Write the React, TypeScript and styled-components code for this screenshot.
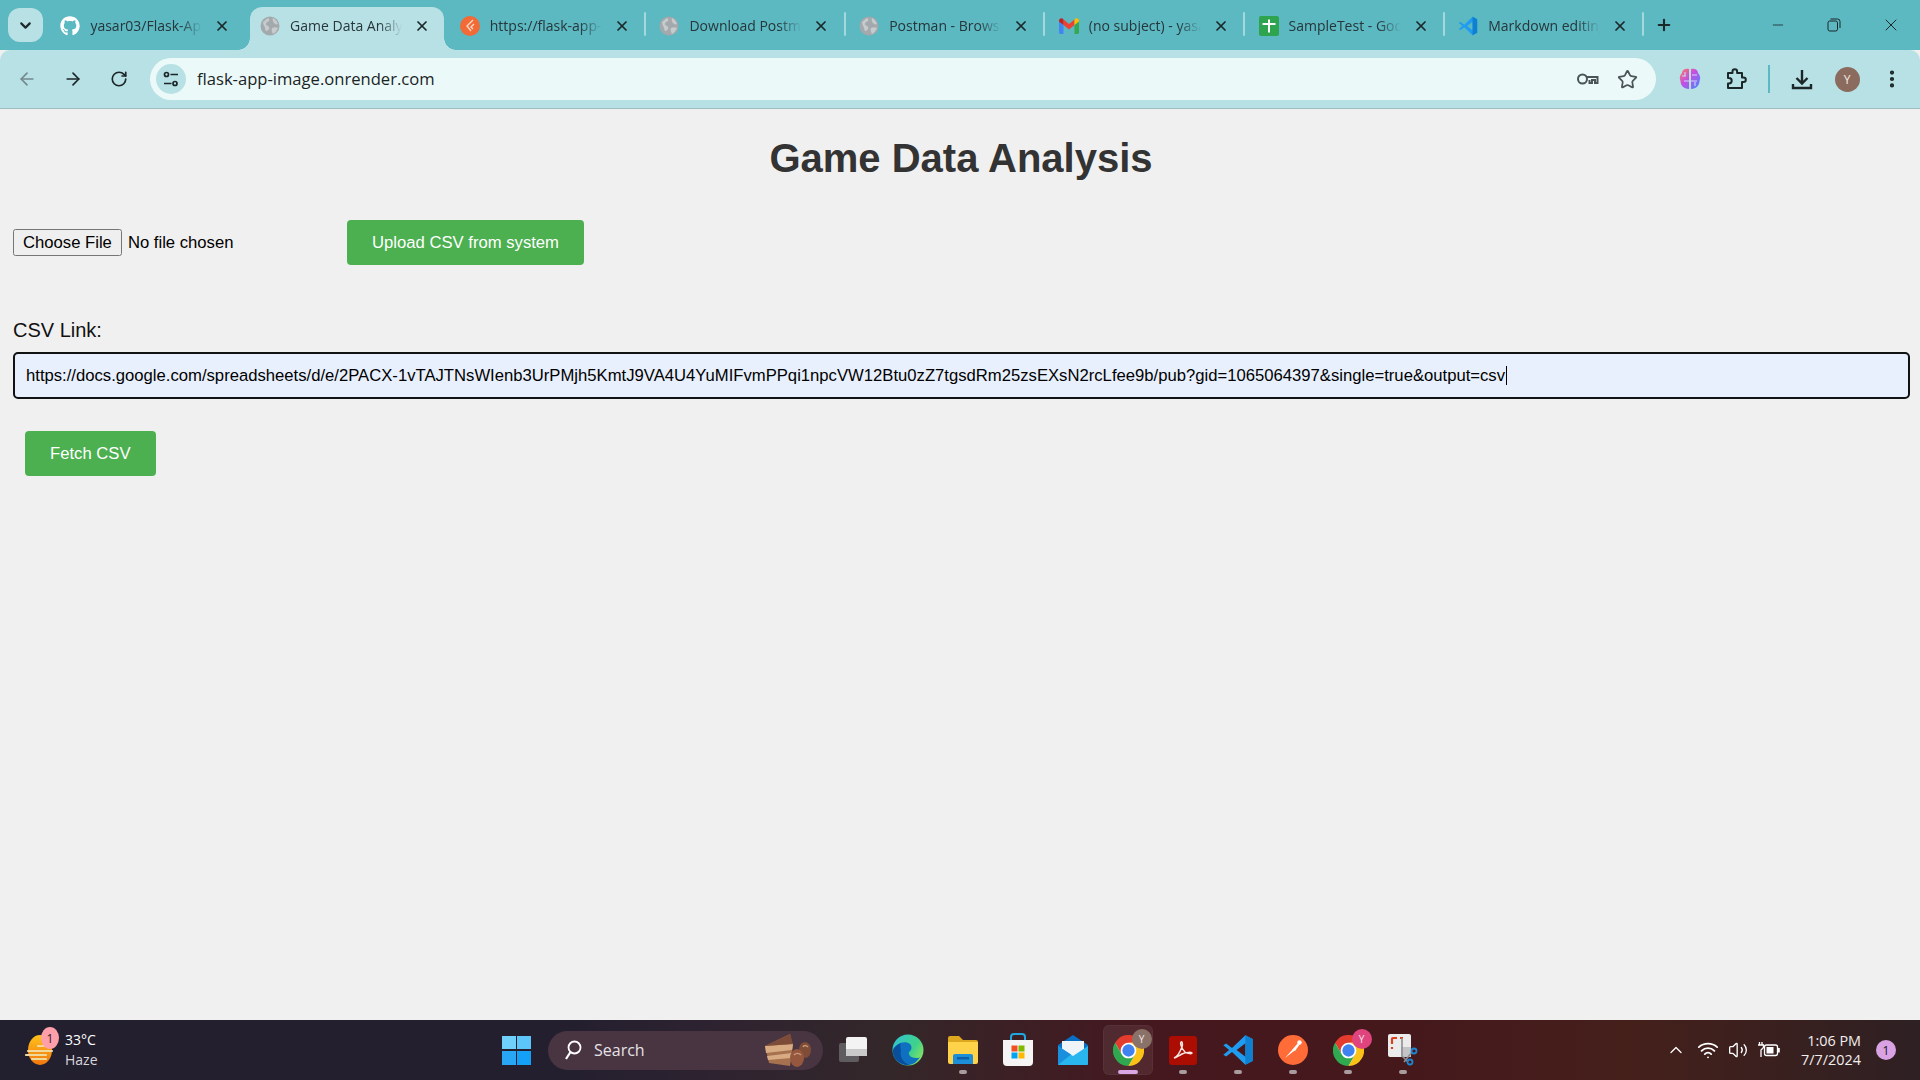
import React from "react";
import styled, { createGlobalStyle } from "styled-components";
import { ArrowLeft, ArrowRight, RotateCw, X, Plus, Minus, Star, ChevronDown, ChevronUp, EllipsisVertical, Wifi, Volume2 } from "lucide-react";
import { FaGithub } from "react-icons/fa";

const URL_VALUE = "https://docs.google.com/spreadsheets/d/e/2PACX-1vTAJTNsWIenb3UrPMjh5KmtJ9VA4U4YuMIFvmPPqi1npcVW12Btu0zZ7tgsdRm25zsEXsN2rcLfee9b/pub?gid=1065064397&single=true&output=csv";

const Global = createGlobalStyle`
  html, body { margin: 0; padding: 0; height: 100%; overflow: hidden; }
  body { font-family: "Liberation Sans", Arial, sans-serif; background: #f0f0f0; }
  * { box-sizing: border-box; }
`;

const Screen = styled.div`
  display: flex; flex-direction: column; width: 1920px; height: 1080px; overflow: hidden;
`;

/* ---------- tab strip ---------- */
const TabStrip = styled.div`
  display: flex; align-items: flex-start; height: 50px; background: #5cb8c1; padding-left: 8px; flex: none;
`;
const TabListButton = styled.div`
  width: 35px; height: 34px; margin-top: 8px; margin-right: 5.4px; border-radius: 12px;
  background: #b8e1e5; color: #1d2a2d; display: flex; align-items: center; justify-content: center;
`;
const Tab = styled.div<{ $active?: boolean; $sep?: boolean }>`
  position: relative; display: flex; align-items: center; width: 199.7px; height: 43px; margin-top: 7px;
  padding: 0 0 5px 12px; flex: none;
  &::before {
    content: ""; position: absolute; display: ${(p) => (p.$active ? "block" : "none")};
    left: 2.4px; right: 3.8px; top: 0; bottom: 0; border-radius: 12px 12px 0 0; background: #b8e1e5;
  }
  &::after {
    content: ""; position: absolute;
    ${(p) => p.$active ? `
      left: -9.6px; right: -8.2px; bottom: 0; height: 12px;
      background:
        radial-gradient(circle at 0 0, transparent 11.5px, #b8e1e5 12px) left bottom / 12px 12px no-repeat,
        radial-gradient(circle at 100% 0, transparent 11.5px, #b8e1e5 12px) right bottom / 12px 12px no-repeat;
    ` : p.$sep ? `
      right: 1.5px; top: 5px; width: 2px; height: 24px; background: #a5d8dc; border-radius: 1px;
    ` : `display: none;`}
  }
`;
const Favicon = styled.span`
  position: relative; width: 20px; height: 20px; flex: none; display: flex; align-items: center; justify-content: center;
  svg { display: block; }
`;
const TabTitle = styled.span`
  position: relative; width: 112px; margin-left: 10px; flex: none; overflow: hidden; white-space: nowrap;
  font: 400 14px/20px "Open Sans", "Noto Sans", sans-serif; color: #26363a;
  -webkit-mask-image: linear-gradient(90deg, #000 80%, transparent 100%);
  mask-image: linear-gradient(90deg, #000 80%, transparent 100%);
`;
const TabClose = styled.span`
  position: relative; margin-left: 12px; width: 16px; height: 16px; color: #1c2729; display: flex; flex: none;
`;
const NewTab = styled.div`
  margin: 16px 0 0 9.5px; color: #1c2729; display: flex;
`;
const WindowControls = styled.div`
  margin-left: auto; display: flex; height: 50px;
`;
const WindowButton = styled.div<{ $w: number }>`
  width: ${(p) => p.$w}px; height: 50px; display: flex; align-items: center; justify-content: center; color: #1b2628;
  padding-bottom: 1px;
`;

/* ---------- toolbar ---------- */
const Toolbar = styled.div`
  display: flex; align-items: center; height: 59px; flex: none; background: #b8e1e5; border-radius: 10px 10px 0 0;
  border-bottom: 1px solid #9dbfc4; padding: 0 0 0 4px;
`;
const ToolButton = styled.div<{ $dim?: boolean; $nudge?: number }>`
  width: 46px; height: 40px; flex: none; display: flex; align-items: center; justify-content: center;
  color: ${(p) => (p.$dim ? "#73898d" : "#1b2628")};
  margin-left: ${(p) => p.$nudge ?? 0}px;
`;
const AddressBar = styled.div`
  display: flex; align-items: center; width: 1506px; height: 42px; margin-left: 8px; border-radius: 21px;
  background: #ecf9f9; padding: 0 9px 0 6px; flex: none;
`;
const TuneChip = styled.div`
  width: 30px; height: 30px; border-radius: 50%; background: #b8e1e5; display: flex; align-items: center; justify-content: center; flex: none;
`;
const UrlText = styled.span`
  margin-left: 11px; font: 400 16.6px/22px "Open Sans", "Noto Sans", sans-serif; color: #1a2426; flex: 1;
`;
const AddressAction = styled.div`
  width: 40px; height: 40px; flex: none; display: flex; align-items: center; justify-content: center; color: #4a5557;
`;
const ToolSeparator = styled.div`
  width: 2px; height: 28px; background: #5cb8c1; margin: 0 9px; flex: none;
`;
const Avatar = styled.div`
  width: 25px; height: 25px; border-radius: 50%; background: #8b6b5e; color: #f3e9e4; display: flex; align-items: center; justify-content: center;
  font: 400 12px "Open Sans", sans-serif;
`;

/* ---------- page ---------- */
const Page = styled.main`
  flex: 1; min-height: 0; background: #f0f0f0; padding: 26px 10px 0 13px;
`;
const Heading = styled.h1`
  margin: 0 -10px 39px -11px; text-align: center; font: 700 40px/46px "Liberation Sans", Arial, sans-serif; color: #333;
`;
const UploadRow = styled.div`
  display: flex; align-items: center; height: 45px;
`;
const FileInput = styled.input`
  width: 334px; font: 400 16.67px "Liberation Sans", Arial, sans-serif; color: #000; flex: none;
  &::file-selector-button {
    height: 27px; padding: 0 8px; margin-right: 6px; font: inherit;
  }
`;
const ActionButton = styled.button<{ $indent?: number }>`
  height: 45px; padding: 0 25px; margin-left: ${(p) => p.$indent ?? 0}px; border: 0; border-radius: 4px; background: #4caf50; color: #fff;
  font: 400 16.67px "Liberation Sans", Arial, sans-serif; flex: none; display: block;
`;
const LinkLabel = styled.label`
  display: block; margin-top: 54px; font: 400 20px/23px "Liberation Sans", Arial, sans-serif; color: #111;
`;
const LinkField = styled.div`
  position: relative; width: 1897px; margin: 10px 0 32px;
`;
const LinkInput = styled.input`
  display: block; width: 100%; height: 47px; padding: 0 11px; border: 2px solid #101214; border-radius: 5px;
  background: #e8f0fe; color: #000; outline: none;
  font: 400 16.67px "Liberation Sans", Arial, sans-serif;
`;
const Caret = styled.span`
  position: absolute; left: 1493px; top: 14px; width: 1px; height: 19px; background: #000;
`;

/* ---------- taskbar ---------- */
const Taskbar = styled.footer`
  display: flex; align-items: center; height: 60px; flex: none; color: #fff;
  background: linear-gradient(90deg, #221f2f 0%, #241f2f 30%, #2f2330 38%, #33272a 46%, #45181f 60%, #45181c 72%, #45201b 85%, #2e2023 100%);
`;
const Weather = styled.div`
  display: flex; align-items: center; width: 502px; padding-left: 24px; flex: none; height: 60px;
`;
const WeatherIcon = styled.div`
  position: relative; width: 32px; height: 32px; flex: none;
`;
const CountBadge = styled.span<{ $bg: string; $fg: string }>`
  display: flex; align-items: center; justify-content: center; width: 20px; height: 20px; border-radius: 50%;
  background: ${(p) => p.$bg}; color: ${(p) => p.$fg}; font: 400 12px "Open Sans", sans-serif;
`;
const WeatherBadge = styled(CountBadge)`
  position: absolute; right: -3px; top: -7px; width: 18px; height: 22px; border-radius: 50%;
`;
const WeatherText = styled.div`
  margin-left: 9px; font: 400 14px/20px "Open Sans", sans-serif; color: #fff;
  span { display: block; color: #d9d6da; }
`;
const StartButton = styled.div`
  width: 29px; height: 29px; flex: none; display: grid; grid-template-columns: 1fr 1fr; gap: 1.5px;
`;
const StartPane = styled.span<{ $bg: string }>`
  background: ${(p) => p.$bg};
`;
const SearchBox = styled.div`
  display: flex; align-items: center; width: 275px; height: 39px; margin: 0 2.5px 0 17px; border-radius: 20px; background: #493442; padding: 0 10px 0 15px; flex: none;
`;
const SearchLabel = styled.span`
  margin-left: 11px; font: 400 16px "Open Sans", sans-serif; color: #e5e2e6; flex: 1;
`;
const AppCell = styled.div<{ $active?: boolean }>`
  position: relative; width: 55px; height: 60px; flex: none; display: flex; align-items: center; justify-content: center;
  ${(p) => p.$active ? `
    &::before {
      content: ""; position: absolute; left: 2.5px; top: 5px; width: 50px; height: 50px; border-radius: 6px;
      background: rgba(255,255,255,0.07); box-shadow: inset 0 0 0 1px rgba(255,255,255,0.04);
    }
  ` : ""}
  svg { position: relative; display: block; }
`;
const RunDot = styled.span<{ $active?: boolean }>`
  position: absolute; left: 50%; bottom: 6px; transform: translateX(-50%); height: 4px; border-radius: 2px;
  width: ${(p) => (p.$active ? 20 : 8)}px; background: ${(p) => (p.$active ? "#dba6e4" : "#a99c9e")};
`;
const ProfileBadge = styled.span<{ $bg: string }>`
  position: absolute; right: 4px; top: 9px; width: 20px; height: 20px; border-radius: 50%; background: ${(p) => p.$bg};
  color: #f4e8e8; display: flex; align-items: center; justify-content: center; font: 400 10px "Open Sans", sans-serif;
`;
const Tray = styled.div`
  margin-left: auto; display: flex; align-items: center; padding-right: 24px; color: #fff; height: 60px;
`;
const TrayIcon = styled.div<{ $w: number }>`
  width: ${(p) => p.$w}px; display: flex; justify-content: center; flex: none;
`;
const Clock = styled.div`
  width: 62px; margin: 0 15px 0 12px; font: 400 14.4px/19px "Open Sans", sans-serif; color: #f2eeee; white-space: nowrap; display: flex; flex-direction: column; align-items: flex-end; flex: none;
`;

/* ---------- drawings ---------- */
const Globe = () => (
  <svg width="20" height="20" viewBox="0 0 20 20">
    <circle cx="10" cy="10" r="9.5" fill="#a3a9ac" />
    <path d="M3 6c2-1 3-3 5-4 1 1 2 2 1 3S6 6 6 8s2 1 3 3-1 3-2 4-2-2-2-3-2-3-2-6zM13 2c2 1 4 3 5 6-2 1-3 0-4-1s-2-3-1-5zM12 12c2-1 4-1 6 0-1 3-3 5-5 6-1-2-2-4-1-6z" fill="#c6cbcd" />
  </svg>
);
const RenderIcon = () => (
  <svg width="20" height="20" viewBox="0 0 20 20">
    <circle cx="10" cy="10" r="10" fill="#f26a35" />
    <path d="M13 4 7 10l4 5M14 8l-3 3 2 2" fill="none" stroke="#ffd9c6" strokeWidth="1.4" />
  </svg>
);
const GmailIcon = () => (
  <svg width="20" height="16" viewBox="0 0 20 16">
    <path d="M0 2.5V14.5a1.4 1.4 0 0 0 1.4 1.4H4.5V7z" fill="#4285f4" />
    <path d="M15.5 7v9h3.1a1.4 1.4 0 0 0 1.4-1.4V2.5z" fill="#34a853" />
    <path d="M4.5 7V1.5L10 6l5.5-4.5V7L10 11.500z" fill="#ea4335" />
    <path d="M0 2.5C0 .6 2.200-.5 3.500.6L4.500 1.500V7L0 3.500z" fill="#c5221f" />
    <path d="M15.500 1.500 16.500.6C17.800-.5 20 .6 20 2.500V3.500L15.500 7z" fill="#fbbc04" />
  </svg>
);
const SheetsIcon = () => (
  <svg width="20" height="20" viewBox="0 0 20 20">
    <rect width="20" height="20" rx="2" fill="#2ea44f" />
    <path d="M3.500 7h13v2h-13zM9 3.500h2v13H9z" fill="#fff" />
  </svg>
);
const VsCode = ({ size }: { size: number }) => (
  <svg width={size} height={size} viewBox="0 0 24 24">
    <path fillRule="evenodd" d="M17.500 1 23 3.800v16.400L17.500 23 7.500 13.500l-4.400 3.400L1 15.500 5.400 12 1 8.500l2.100-1.400 4.400 3.400zM17.500 7 11 12l6.500 5z" fill="#1f9cf0" />
    <path d="M17.500 1 23 3.800v16.400L17.500 23z" fill="#0f7fcf" />
  </svg>
);
const TuneIcon = () => (
  <svg width="18" height="18" viewBox="0 0 18 18" fill="none" stroke="#1b2628" strokeWidth="1.700">
    <circle cx="4.500" cy="4.500" r="2" />
    <path d="M8.500 4.500H16M2 13.500h7.500" />
    <circle cx="13" cy="13.500" r="2" />
  </svg>
);
const KeyIcon = () => (
  <svg width="23" height="22" viewBox="0 0 22 22" fill="none" stroke="#4a5557" strokeWidth="2">
    <circle cx="6" cy="11" r="4.500" />
    <path d="M10.500 9H21v6h-2.500v-3h-3v3H13v-3" />
  </svg>
);
const BrainIcon = () => (
  <svg width="22" height="24" viewBox="0 0 22 24">
    <defs>
      <linearGradient id="brainGrad" x1="0" y1="0" x2="1" y2="1">
        <stop offset="0" stopColor="#ff7a59" />
        <stop offset="0.45" stopColor="#c44fe4" />
        <stop offset="1" stopColor="#3f8cff" />
      </linearGradient>
    </defs>
    <path d="M10 2C6 1 3 3 3 6 1 8 0 11 1.500 14c0 4 3 8 8.500 8zM12 2c4-1 7 1 7 4 2 2 3 5 1.500 8 0 4-3 8-8.500 8z" fill="url(#brainGrad)" />
    <path d="M3 9h4M5 14h5M13 8h5M12 14h6M6 5v4M16 15v4" stroke="#cfd9f7" strokeWidth="1.100" fill="none" />
  </svg>
);
const PuzzleIcon = () => (
  <svg width="24" height="24" viewBox="1 0 24 24" fill="none" stroke="#1b2628" strokeWidth="2" strokeLinejoin="round">
    <path d="M5 6h4.500V4.500a2.300 2.300 0 0 1 4.600 0V6H19v4.500h1.500a2.300 2.300 0 0 1 0 4.600H19V21H5v-4.500h1a2.700 2.700 0 0 0 0-5.400H5z" />
  </svg>
);
const DownloadIcon = () => (
  <svg width="24" height="24" viewBox="0 0 24 24" fill="none" stroke="#1b2628" strokeWidth="2.400">
    <path d="M12 3v13M6.500 11 12 16.500 17.500 11" />
    <path d="M3 17v4h18v-4" />
  </svg>
);
const RestoreIcon = () => (
  <svg width="14" height="14" viewBox="0 0 14 14" fill="none" stroke="#1b2628" strokeWidth="1">
    <rect x="1" y="3" width="9.500" height="10" rx="1.800" />
    <path d="M3.500 1h7a2.500 2.500 0 0 1 2.500 2.500V10" />
  </svg>
);
const WeatherArt = () => (
  <svg width="32" height="32" viewBox="0 0 32 32">
    <defs>
      <linearGradient id="sunGrad" x1="0" y1="0" x2="0" y2="1">
        <stop offset="0" stopColor="#ffc21a" />
        <stop offset="1" stopColor="#f0760f" />
      </linearGradient>
    </defs>
    <ellipse cx="16" cy="16" rx="12" ry="15" fill="url(#sunGrad)" />
    <path d="M4 17h24M2 21h20M8 25h14M14 12h14" stroke="#f1d89c" strokeWidth="2.200" strokeLinecap="round" />
  </svg>
);
const SearchGlass = () => (
  <svg width="20" height="22" viewBox="0 0 20 22" fill="none" stroke="#fff" strokeWidth="1.800">
    <circle cx="11.500" cy="8.500" r="6" />
    <path d="M7.500 13 3 20" strokeWidth="2.200" />
  </svg>
);
const CakeArt = () => (
  <svg width="50" height="36" viewBox="0 0 50 36">
    <path d="M2 14 27 2l3 12-3 20-21-3z" fill="#a5714f" />
    <path d="M2 14 30 12l-1 6L3 21zM4 24l25-3-1 5L5 28z" fill="#d9ab83" />
    <path d="M2 14 27 2l3 10z" fill="#7c4c38" />
    <ellipse cx="42" cy="18" rx="6" ry="8" fill="#7f4c37" />
    <ellipse cx="34" cy="26" rx="7" ry="9" fill="#95583f" />
    <path d="M31 23c2-2 5-2 7 0M40 15c1-2 3-2 5 0" stroke="#c9987a" strokeWidth="1.500" fill="none" />
  </svg>
);
const TaskViewIcon = () => (
  <svg width="30" height="30" viewBox="0 0 30 30">
    <rect x="1" y="8" width="20" height="19" rx="2" fill="#5e5c5e" />
    <rect x="8" y="2" width="21" height="19" rx="2" fill="#f3f3f3" />
    <rect x="8" y="14" width="21" height="7" fill="#c9c9c9" />
  </svg>
);
const EdgeIcon = () => (
  <svg width="32" height="32" viewBox="0 0 32 32">
    <defs>
      <linearGradient id="edgeA" x1="0" y1="0" x2="1" y2="0.6">
        <stop offset="0" stopColor="#2fc2d8" />
        <stop offset="0.7" stopColor="#3fd18a" />
        <stop offset="1" stopColor="#7ee06a" />
      </linearGradient>
    </defs>
    <circle cx="16" cy="16" r="15.500" fill="url(#edgeA)" />
    <path d="M1 16c3-7 12-10 17-6 3 3 1 7-1 8-1 3 2 6 7 6 2 0 3 0 4-1-3 5-7 8-13 8C7 31 0 24 1 16z" fill="#0f6fc0" />
    <path d="M9 16c-2 6 2 13 9 15C8 32 0 24 1 16c1-3 4-5 8-7-1 2-1 4 0 7z" fill="#0a4f9c" />
  </svg>
);
const FolderIcon = () => (
  <svg width="32" height="30" viewBox="0 0 32 30">
    <path d="M1 3a2 2 0 0 1 2-2h9l4 4h13a2 2 0 0 1 2 2v4H1z" fill="#dda81f" />
    <path d="M1 7h30v20a2 2 0 0 1-2 2H3a2 2 0 0 1-2-2z" fill="#ffd349" />
    <path d="M6 29v-8a2 2 0 0 1 2-2h16a2 2 0 0 1 2 2v8z" fill="#1c8fd8" />
    <rect x="10" y="22" width="12" height="2.500" fill="#0f5fa8" />
  </svg>
);
const StoreIcon = () => (
  <svg width="32" height="34" viewBox="0 0 32 34">
    <path d="M9 8V4a3 3 0 0 1 3-3h8a3 3 0 0 1 3 3v4" fill="none" stroke="#1fa8e0" strokeWidth="2" />
    <path d="M1 7h30v22a4 4 0 0 1-4 4H5a4 4 0 0 1-4-4z" fill="#f5f5f5" />
    <rect x="9.500" y="12.500" width="6" height="6" fill="#f25022" />
    <rect x="16.500" y="12.500" width="6" height="6" fill="#7fba00" />
    <rect x="9.500" y="19.500" width="6" height="6" fill="#00a4ef" />
    <rect x="16.500" y="19.500" width="6" height="6" fill="#ffb900" />
  </svg>
);
const MailIcon = () => (
  <svg width="32" height="32" viewBox="0 0 32 32">
    <path d="M1 11 16 1l15 10v19a1 1 0 0 1-1 1H2a1 1 0 0 1-1-1z" fill="#0a6fc2" />
    <path d="M5 7h22v12L16 25 5 19z" fill="#eef4f8" />
    <path d="M1 12 16 22 31 12v18a1 1 0 0 1-1 1H2a1 1 0 0 1-1-1z" fill="#29b6ee" />
    <path d="M1 31 14 20.500 1 12z" fill="#1a8fde" />
  </svg>
);
const ChromeIcon = () => (
  <svg width="31" height="31" viewBox="0 0 48 48">
    <circle cx="24" cy="24" r="23" fill="#fff" />
    <path d="M44.800 12A24 24 0 0 0 3.200 12L13.600 30A12 12 0 0 1 24 12z" fill="#e33b2e" />
    <path d="M3.200 12A24 24 0 0 0 24 48L34.400 30A12 12 0 0 1 13.600 30z" fill="#2fa84f" />
    <path d="M24 48A24 24 0 0 0 44.800 12H24A12 12 0 0 1 34.400 30z" fill="#fbc116" />
    <circle cx="24" cy="24" r="9.500" fill="#3f82f0" />
  </svg>
);
const AcrobatIcon = () => (
  <svg width="28" height="29" viewBox="0 0 28 29">
    <rect width="28" height="29" rx="3" fill="#ab0d02" />
    <path d="M5 22c3-1 6-6 8-11 1-4 0-6-1-5s0 6 4 10c3 2 7 2 7 1s-6-1-10 1-6 4-8 4z" fill="none" stroke="#f8e6e3" strokeWidth="1.500" />
  </svg>
);
const PostmanIcon = () => (
  <svg width="30" height="30" viewBox="0 0 30 30">
    <circle cx="15" cy="15" r="15" fill="#ff6c37" />
    <path d="M7 23 15 14l3-2-2 4z M14 15l6-7 2 1-5 7z" fill="#fff" />
    <circle cx="21.500" cy="7.500" r="2.200" fill="#fff" />
  </svg>
);
const SnipIcon = () => (
  <svg width="30" height="32" viewBox="0 0 30 32">
    <rect x="0" y="0" width="23" height="23" rx="2" fill="#ecebeb" />
    <path d="M4 10V5a1 1 0 0 1 1-1h4M4 13v2M12 4h3" stroke="#d8401f" strokeWidth="2.200" fill="none" />
    <rect x="13" y="13" width="10" height="10" fill="#c4c4c6" />
    <path d="M14 4v18l6 6M24 18 16 28" stroke="#8c8f92" strokeWidth="1.600" fill="none" />
    <circle cx="26" cy="17" r="2.500" fill="none" stroke="#1d86d0" strokeWidth="1.800" />
    <circle cx="22" cy="28" r="2.500" fill="none" stroke="#1d86d0" strokeWidth="1.800" />
  </svg>
);
const BatteryIcon = () => (
  <svg width="22" height="16" viewBox="0 0 22 16" fill="none">
    <rect x="6.500" y="3" width="13" height="10.500" rx="2" stroke="#fff" strokeWidth="1.300" />
    <rect x="8.500" y="5" width="7" height="6.500" fill="#fff" />
    <rect x="20" y="6" width="1.800" height="4.500" fill="#fff" />
    <path d="M1.500 0v3M4 0v3M0 3h5.500v2.500L3 8v7" stroke="#fff" strokeWidth="1.300" />
  </svg>
);

const tabs = [
  { title: "yasar03/Flask-App-Image", icon: <FaGithub size={20} color="#fff" /> },
  { title: "Game Data Analysis", icon: <Globe />, active: true },
  { title: "https://flask-app-image", icon: <RenderIcon /> },
  { title: "Download Postman", icon: <Globe />, sep: true },
  { title: "Postman - Browser", icon: <Globe />, sep: true },
  { title: "(no subject) - yasar", icon: <GmailIcon />, sep: true },
  { title: "SampleTest - Google", icon: <SheetsIcon />, sep: true },
  { title: "Markdown editing", icon: <VsCode size={20} />, sep: true },
];

export default function App() {
  return (
    <Screen>
      <Global />
      <TabStrip>
        <TabListButton><ChevronDown size={17} strokeWidth={3} /></TabListButton>
        {tabs.map((t, i) => (
          <Tab key={i} $active={t.active} $sep={t.sep || i === 2}>
            <Favicon>{t.icon}</Favicon>
            <TabTitle>{t.title}</TabTitle>
            <TabClose><X size={16} strokeWidth={2.6} /></TabClose>
          </Tab>
        ))}
        <NewTab><Plus size={18} strokeWidth={2.8} /></NewTab>
        <WindowControls>
          <WindowButton $w={56}><Minus size={16} strokeWidth={1.2} /></WindowButton>
          <WindowButton $w={56}><RestoreIcon /></WindowButton>
          <WindowButton $w={58}><X size={20} strokeWidth={1.2} /></WindowButton>
        </WindowControls>
      </TabStrip>

      <Toolbar>
        <ToolButton $dim><ArrowLeft size={20} strokeWidth={2} /></ToolButton>
        <ToolButton><ArrowRight size={20} strokeWidth={2} /></ToolButton>
        <ToolButton><RotateCw size={18} strokeWidth={2.2} /></ToolButton>
        <AddressBar>
          <TuneChip><TuneIcon /></TuneChip>
          <UrlText>flask-app-image.onrender.com</UrlText>
          <AddressAction><KeyIcon /></AddressAction>
          <AddressAction><Star size={21} strokeWidth={2} /></AddressAction>
        </AddressBar>
        <ToolButton $nudge={11}><BrainIcon /></ToolButton>
        <ToolButton><PuzzleIcon /></ToolButton>
        <ToolSeparator />
        <ToolButton><DownloadIcon /></ToolButton>
        <ToolButton $nudge={-1}><Avatar>Y</Avatar></ToolButton>
        <ToolButton $nudge={-1}><EllipsisVertical size={22} strokeWidth={2.6} /></ToolButton>
      </Toolbar>

      <Page>
        <Heading>Game Data Analysis</Heading>
        <UploadRow>
          <FileInput type="file" />
          <ActionButton>Upload CSV from system</ActionButton>
        </UploadRow>
        <LinkLabel htmlFor="csv-link">CSV Link:</LinkLabel>
        <LinkField>
          <LinkInput id="csv-link" type="text" defaultValue={URL_VALUE} />
          <Caret />
        </LinkField>
        <ActionButton $indent={12}>Fetch CSV</ActionButton>
      </Page>

      <Taskbar>
        <Weather>
          <WeatherIcon>
            <WeatherArt />
            <WeatherBadge $bg="#ff9fa9" $fg="#2a1a22">1</WeatherBadge>
          </WeatherIcon>
          <WeatherText>33°C<span>Haze</span></WeatherText>
        </Weather>
        <StartButton>
          <StartPane $bg="#6fd0fb" />
          <StartPane $bg="#5cc6fb" />
          <StartPane $bg="#27a7f5" />
          <StartPane $bg="#13a0f6" />
        </StartButton>
        <SearchBox>
          <SearchGlass />
          <SearchLabel>Search</SearchLabel>
          <CakeArt />
        </SearchBox>
        <AppCell><TaskViewIcon /></AppCell>
        <AppCell><EdgeIcon /></AppCell>
        <AppCell><FolderIcon /><RunDot /></AppCell>
        <AppCell><StoreIcon /></AppCell>
        <AppCell><MailIcon /></AppCell>
        <AppCell $active><ChromeIcon /><ProfileBadge $bg="#8b7268">Y</ProfileBadge><RunDot $active /></AppCell>
        <AppCell><AcrobatIcon /><RunDot /></AppCell>
        <AppCell><VsCode size={32} /><RunDot /></AppCell>
        <AppCell><PostmanIcon /><RunDot /></AppCell>
        <AppCell><ChromeIcon /><ProfileBadge $bg="#e0447f">Y</ProfileBadge><RunDot /></AppCell>
        <AppCell><SnipIcon /><RunDot /></AppCell>
        <Tray>
          <TrayIcon $w={30}><ChevronUp size={20} strokeWidth={1.5} /></TrayIcon>
          <TrayIcon $w={34}><Wifi size={22} strokeWidth={2} /></TrayIcon>
          <TrayIcon $w={26}><Volume2 size={20} strokeWidth={1.6} /></TrayIcon>
          <TrayIcon $w={36}><BatteryIcon /></TrayIcon>
          <Clock><span>1:06 PM</span><span>7/7/2024</span></Clock>
          <CountBadge $bg="#d9a3e3" $fg="#1d1420">1</CountBadge>
        </Tray>
      </Taskbar>
    </Screen>
  );
}
